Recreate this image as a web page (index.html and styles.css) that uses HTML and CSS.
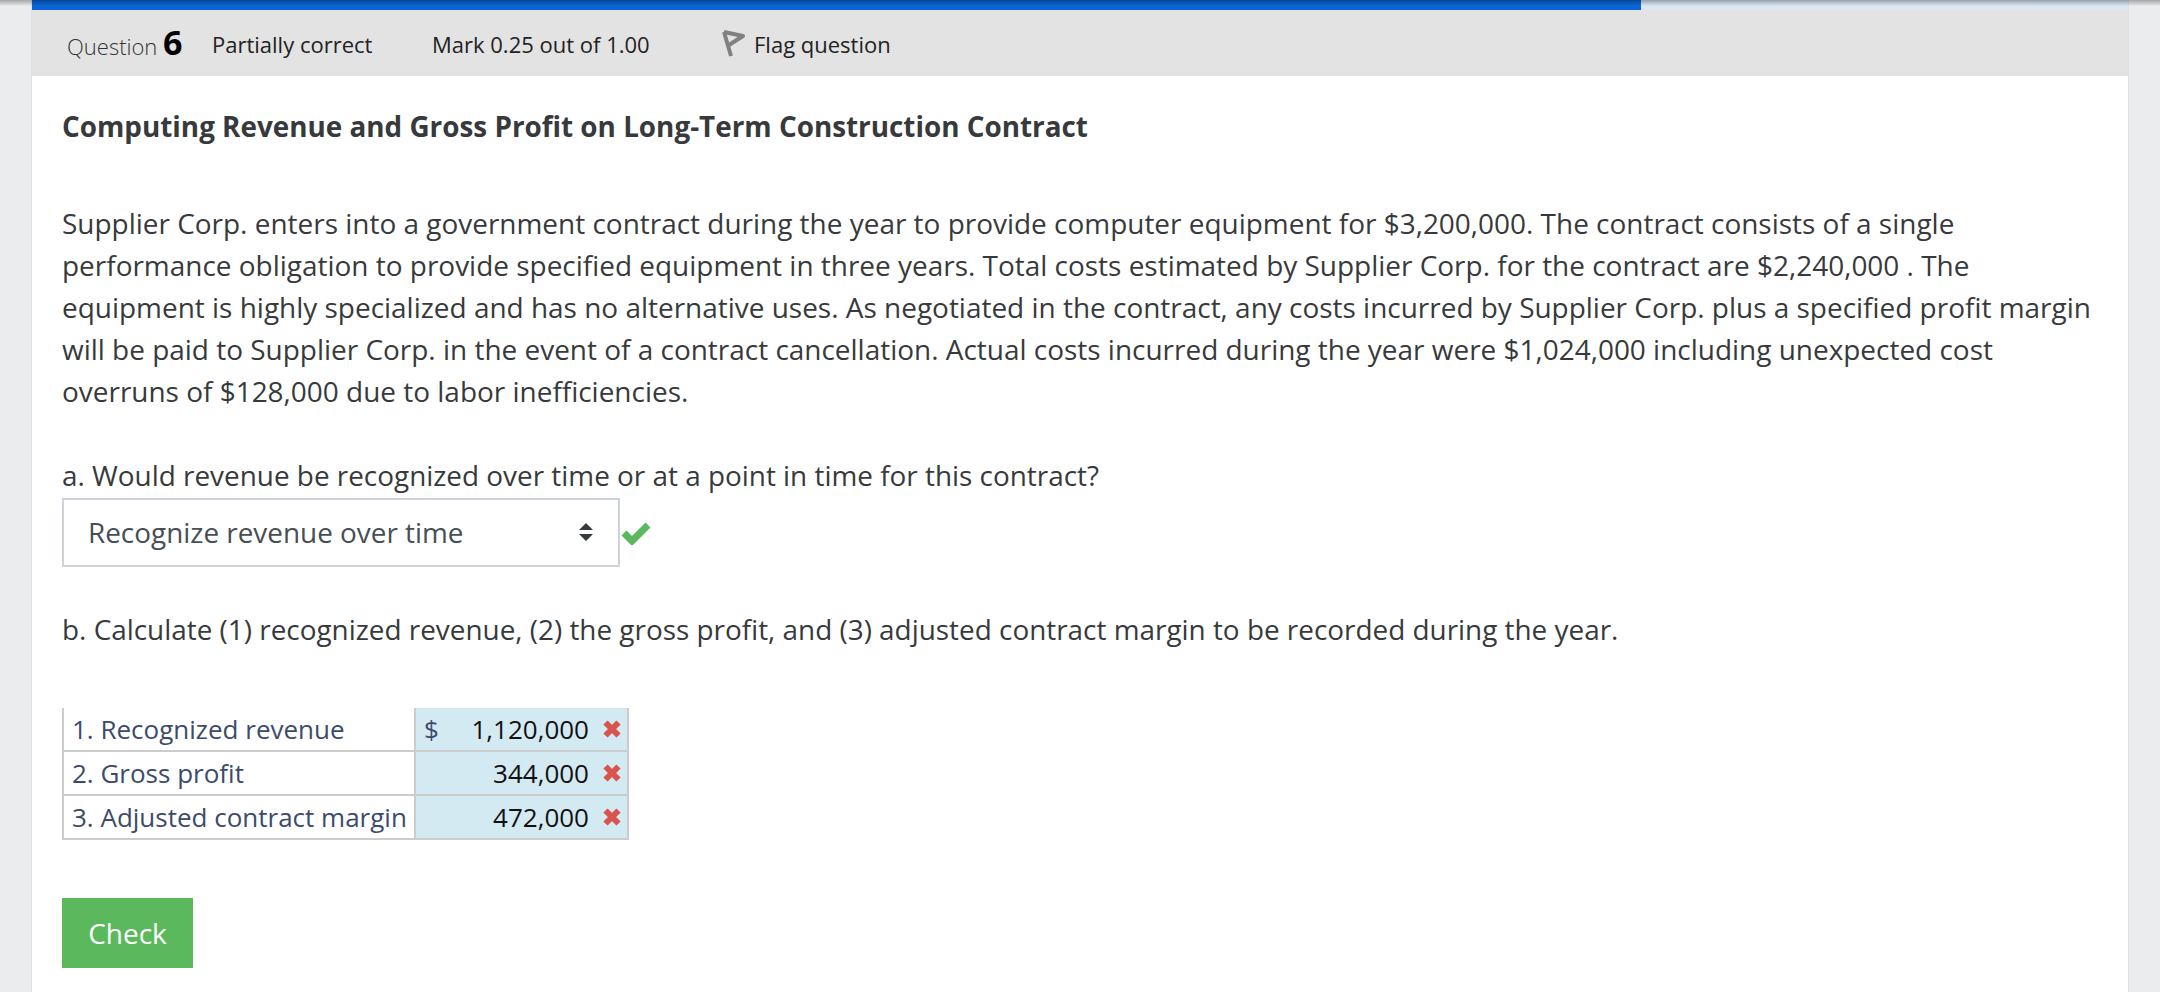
FILE: index.html
```html
<!DOCTYPE html>
<html lang="en">
<head>
  <meta charset="UTF-8" />
  <title>Question 6</title>
  <link rel="stylesheet" href="styles.css">
</head>
<body>
  <div class="top-shadow"></div>
  <div class="panel">
    <div class="progress"><div class="progress-fill"></div></div>

    <div class="que-header">
      <span class="que-no">Question <b>6</b></span>
      <span class="que-state">Partially correct</span>
      <span class="que-mark">Mark 0.25 out of 1.00</span>
      <span class="que-flag">
        <svg class="flag-icon" width="26" height="30" viewBox="0 0 26 30">
          <path d="M4 3 L11 27 M4 3 L23 7 L9 16" fill="none" stroke="#808080" stroke-width="4" stroke-linejoin="round" />
        </svg>
        Flag question
      </span>
    </div>

    <div class="content">
      <h3 class="title">Computing Revenue and Gross Profit on Long-Term Construction Contract</h3>

      <p class="intro">Supplier Corp. enters into a government contract during the year to provide computer equipment for $3,200,000. The contract consists of a single performance obligation to provide specified equipment in three years. Total costs estimated by Supplier Corp. for the contract are $2,240,000 . The equipment is highly specialized and has no alternative uses. As negotiated in the contract, any costs incurred by Supplier Corp. plus a specified profit margin will be paid to Supplier Corp. in the event of a contract cancellation. Actual costs incurred during the year were $1,024,000 including unexpected cost overruns of $128,000 due to labor inefficiencies.</p>

      <p class="part-a">a. Would revenue be recognized over time or at a point in time for this contract?</p>
      <div class="answer-row">
        <div class="select-box">
          <span>Recognize revenue over time</span>
          <svg width="16" height="20" viewBox="0 0 16 20">
            <path d="M8 1 L15 8 L1 8 Z M1 12 L15 12 L8 19 Z" fill="#373a3c" />
          </svg>
        </div>
        <svg class="check-icon" width="30" height="24" viewBox="0 0 30 24">
          <path d="M3 12 L11 20 L27 4" fill="none" stroke="#5cb85c" stroke-width="7" />
        </svg>
      </div>

      <p class="part-b">b. Calculate (1) recognized revenue, (2) the gross profit, and (3) adjusted contract margin to be recorded during the year.</p>

      <table class="calc">
        <tr>
          <td class="label">1. Recognized revenue</td>
          <td class="value">
            <div class="value-inner">
              <span class="dollar">$</span><span class="num">1,120,000</span>
              <svg class="wrong" width="20" height="20" viewBox="0 0 20 20"><path d="M3.5 3.5 L16.5 16.5 M16.5 3.5 L3.5 16.5" stroke="#d9534f" stroke-width="6" /></svg>
            </div>
          </td>
        </tr>
        <tr>
          <td class="label">2. Gross profit</td>
          <td class="value">
            <div class="value-inner">
              <span class="num">344,000</span>
              <svg class="wrong" width="20" height="20" viewBox="0 0 20 20"><path d="M3.5 3.5 L16.5 16.5 M16.5 3.5 L3.5 16.5" stroke="#d9534f" stroke-width="6" /></svg>
            </div>
          </td>
        </tr>
        <tr>
          <td class="label">3. Adjusted contract margin</td>
          <td class="value">
            <div class="value-inner">
              <span class="num">472,000</span>
              <svg class="wrong" width="20" height="20" viewBox="0 0 20 20"><path d="M3.5 3.5 L16.5 16.5 M16.5 3.5 L3.5 16.5" stroke="#d9534f" stroke-width="6" /></svg>
            </div>
          </td>
        </tr>
      </table>

      <button class="check-btn">Check</button>
    </div>
  </div>
</body>
</html>
```
FILE: styles.css
```css
html, body {
  height: 100%;
}

body {
  margin: 0;
  background-color: #ebecee;
  font-family: "Open Sans", sans-serif;
  color: #373a3c;
  overflow: hidden;
}

.top-shadow {
  position: absolute;
  left: 0;
  top: 0;
  width: 100%;
  height: 6px;
  background: linear-gradient(rgba(0, 0, 0, 0.3), rgba(0, 0, 0, 0));
}

.panel {
  margin-left: 32px;
  width: 2096px;
  height: 992px;
  background: #fff;
  box-shadow: 0 0 0 1px #dfdfdf;
}

.progress {
  height: 10px;
  background-color: #dbe7f5;
}

.progress-fill {
  width: 1609px;
  height: 10px;
  background-color: #0a66d6;
}

.que-header {
  display: flex;
  align-items: center;
  height: 66px;
  padding: 2px 0 0 35px;
  box-sizing: border-box;
  background-color: #e3e3e3;
  font-size: 22px;
  color: #222;
}

.que-no {
  width: 145px;
  font-weight: 300;
  color: #333;
  line-height: 40px;
}

.que-no b {
  font-size: 34px;
  font-weight: 700;
  color: #000;
}

.que-state {
  width: 220px;
}

.que-mark {
  width: 288px;
}

.que-flag {
  display: flex;
  align-items: center;
  gap: 8px;
}

.content {
  padding: 0 30px;
}

.title {
  margin: 30px 0 0;
  font-size: 27.85px;
  line-height: 40px;
  font-weight: 700;
  color: #373a3c;
}

.intro, .part-a, .part-b {
  font-size: 27.9px;
  line-height: 42px;
  margin: 0;
}

.intro {
  font-size: 27.96px;
  margin-top: 56px;
}

.part-a {
  margin-top: 42px;
}

.answer-row {
  display: flex;
  align-items: center;
  margin-top: 2px;
}

.select-box {
  display: flex;
  align-items: center;
  justify-content: space-between;
  box-sizing: border-box;
  width: 558px;
  height: 69px;
  padding: 0 24px 2px 24px;
  border: 2px solid #cdd3d8;
  font-size: 27.9px;
  color: #464e56;
}

.check-icon {
  margin-left: 1px;
}

.part-b {
  margin-top: 41px;
}

.calc {
  margin-top: 58px;
  border-collapse: collapse;
  font-size: 26px;
}

.calc td {
  height: 42px;
  padding: 0;
  border: 2px solid #ccc;
}

.calc tr:first-child td {
  border-top: none;
}

.label {
  width: 342px;
  padding-left: 8px !important;
  color: #3c4b6c;
  white-space: nowrap;
}

.value {
  width: 211px;
  background-color: #d4eaf2;
}

.value-inner {
  display: flex;
  align-items: center;
  padding: 0 5px 0 8px;
}

.dollar {
  color: #3c4b6c;
}

.num {
  margin-left: auto;
  color: #111;
}

.wrong {
  margin-left: 13px;
}

.check-btn {
  display: block;
  margin-top: 58px;
  width: 131px;
  height: 70px;
  background-color: #5cb85c;
  color: #fff;
  border: none;
  font-family: "Open Sans", sans-serif;
  font-size: 28px;
}
```
